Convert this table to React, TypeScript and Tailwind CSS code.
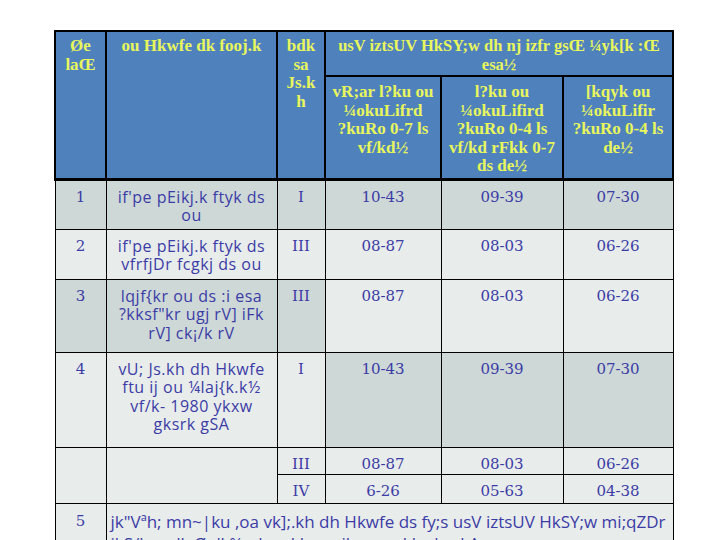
import React from "react";

const head =
  "border-2 border-black bg-[#4f81bd] text-[#e8f65e] font-bold text-center align-top px-1 text-[17px] leading-[18.5px] [font-family:'Liberation_Serif',serif]";
const cell = "border-[1.5px] border-black text-center align-top px-1 pt-[7px] text-[#3c3ca6]";
const sans = "text-[16px] leading-[18.5px] tracking-[0.5px] whitespace-nowrap [font-family:'Open_Sans',Lato,sans-serif]";
const serif = "text-[15px] leading-[18.5px] [font-family:'DejaVu_Serif',serif]";
const dark = "bg-[#cdd8d7]";
const light = "bg-[#e8eceb]";

function Lines({ lines }: { lines: string[] }) {
  return (
    <>
      {lines.map((l, i) => (
        <React.Fragment key={i}>
          {i > 0 && <br />}
          {l}
        </React.Fragment>
      ))}
    </>
  );
}

type Row = {
  n: string;
  land: string[];
  unit: string;
  vals: string[];
  h: string;
  left: string;
  right: string;
};

const rows: Row[] = [
  { n: "1", land: ["if'pe pEikj.k ftyk ds", "ou"], unit: "I", vals: ["10-43", "09-39", "07-30"], h: "h-[50px]", left: dark, right: dark },
  { n: "2", land: ["if'pe pEikj.k ftyk ds", "vfrfjDr fcgkj ds ou"], unit: "III", vals: ["08-87", "08-03", "06-26"], h: "h-[50px]", left: light, right: light },
  { n: "3", land: ["lqjf{kr ou ds :i esa", "?kksf\"kr ugj rV] iFk", "rV] ck¡/k rV"], unit: "III", vals: ["08-87", "08-03", "06-26"], h: "h-[73px]", left: dark, right: light },
  { n: "4", land: ["vU; Js.kh dh Hkwfe", "ftu ij ou ¼laj{k.k½", "vf/k- 1980 ykxw", "gksrk gSA"], unit: "I", vals: ["10-43", "09-39", "07-30"], h: "h-[95px]", left: light, right: dark },
];

export default function App() {
  return (
    <div className="h-[540px] w-[720px] bg-white pt-[30px] pl-[54px] overflow-hidden">
      <table className="table-fixed border-collapse w-[618px]">
        <colgroup>
          <col className="w-[51px]" />
          <col className="w-[171px]" />
          <col className="w-[48px]" />
          <col className="w-[116px]" />
          <col className="w-[122px]" />
          <col className="w-[110px]" />
        </colgroup>
        <thead>
          <tr className="h-[45px]">
            <th rowSpan={2} className={`${head} pt-[5px] border-b-[3px]`}><Lines lines={["Øe", "laŒ"]} /></th>
            <th rowSpan={2} className={`${head} pt-[5px] border-b-[3px]`}>ou Hkwfe dk fooj.k</th>
            <th rowSpan={2} className={`${head} pt-[5px] border-b-[3px]`}><Lines lines={["bdk", "sa", "Js.k", "h"]} /></th>
            <th colSpan={3} className={`${head} pt-[5px] !text-[16.5px]`}><Lines lines={["usV iztsUV HkSY;w dh nj izfr gsŒ ¼yk[k :Œ", "esa½"]} /></th>
          </tr>
          <tr className="h-[103px]">
            <th className={`${head} pt-[6px] border-b-[3px]`}><Lines lines={["vR;ar l?ku ou", "¼okuLifrd", "?kuRo 0-7 ls", "vf/kd½"]} /></th>
            <th className={`${head} pt-[6px] border-b-[3px]`}><Lines lines={["l?ku ou", "¼okuLifird", "?kuRo 0-4 ls", "vf/kd rFkk 0-7", "ds de½"]} /></th>
            <th className={`${head} pt-[6px] border-b-[3px]`}><Lines lines={["[kqyk ou", "¼okuLifir", "?kuRo 0-4 ls", "de½"]} /></th>
          </tr>
        </thead>
        <tbody>
          {rows.map((r) => (
            <tr key={r.n} className={r.h}>
              <td className={`${cell} ${serif} ${r.left}`}>{r.n}</td>
              <td className={`${cell} ${sans} ${r.left}`}><Lines lines={r.land} /></td>
              <td className={`${cell} ${serif} ${r.left}`}>{r.unit}</td>
              {r.vals.map((v, i) => (
                <td key={i} className={`${cell} ${serif} ${r.right}`}>{v}</td>
              ))}
            </tr>
          ))}
          <tr className="h-[27px]">
            <td rowSpan={2} className={`${cell} ${light}`} />
            <td rowSpan={2} className={`${cell} ${light}`} />
            <td className={`${cell} ${serif} ${light} pt-[4px]`}>III</td>
            <td className={`${cell} ${serif} ${light} pt-[4px]`}>08-87</td>
            <td className={`${cell} ${serif} ${light} pt-[4px]`}>08-03</td>
            <td className={`${cell} ${serif} ${light} pt-[4px]`}>06-26</td>
          </tr>
          <tr className="h-[29px]">
            <td className={`${cell} ${serif} ${light} pt-[4px]`}>IV</td>
            <td className={`${cell} ${serif} ${light} pt-[4px]`}>6-26</td>
            <td className={`${cell} ${serif} ${light} pt-[4px]`}>05-63</td>
            <td className={`${cell} ${serif} ${light} pt-[4px]`}>04-38</td>
          </tr>
          <tr className="h-[60px]">
            <td className={`${cell} ${serif} ${light} pt-[8px]`}>5</td>
            <td colSpan={5} className={`${cell} text-[17px] leading-[22px] whitespace-nowrap [font-family:'Open_Sans',Lato,sans-serif] ${light} !text-left pt-[7px] pl-[4px]`}>
              <Lines lines={["jk\"Vªh; mn~|ku ,oa vk];.kh dh Hkwfe ds fy;s usV iztsUV HkSY;w mi;qZDr", "ikS/ksa dk Øe'k% nl xq.kk ,oa ikap xq.kk gksxkA"]} />
            </td>
          </tr>
        </tbody>
      </table>
    </div>
  );
}
